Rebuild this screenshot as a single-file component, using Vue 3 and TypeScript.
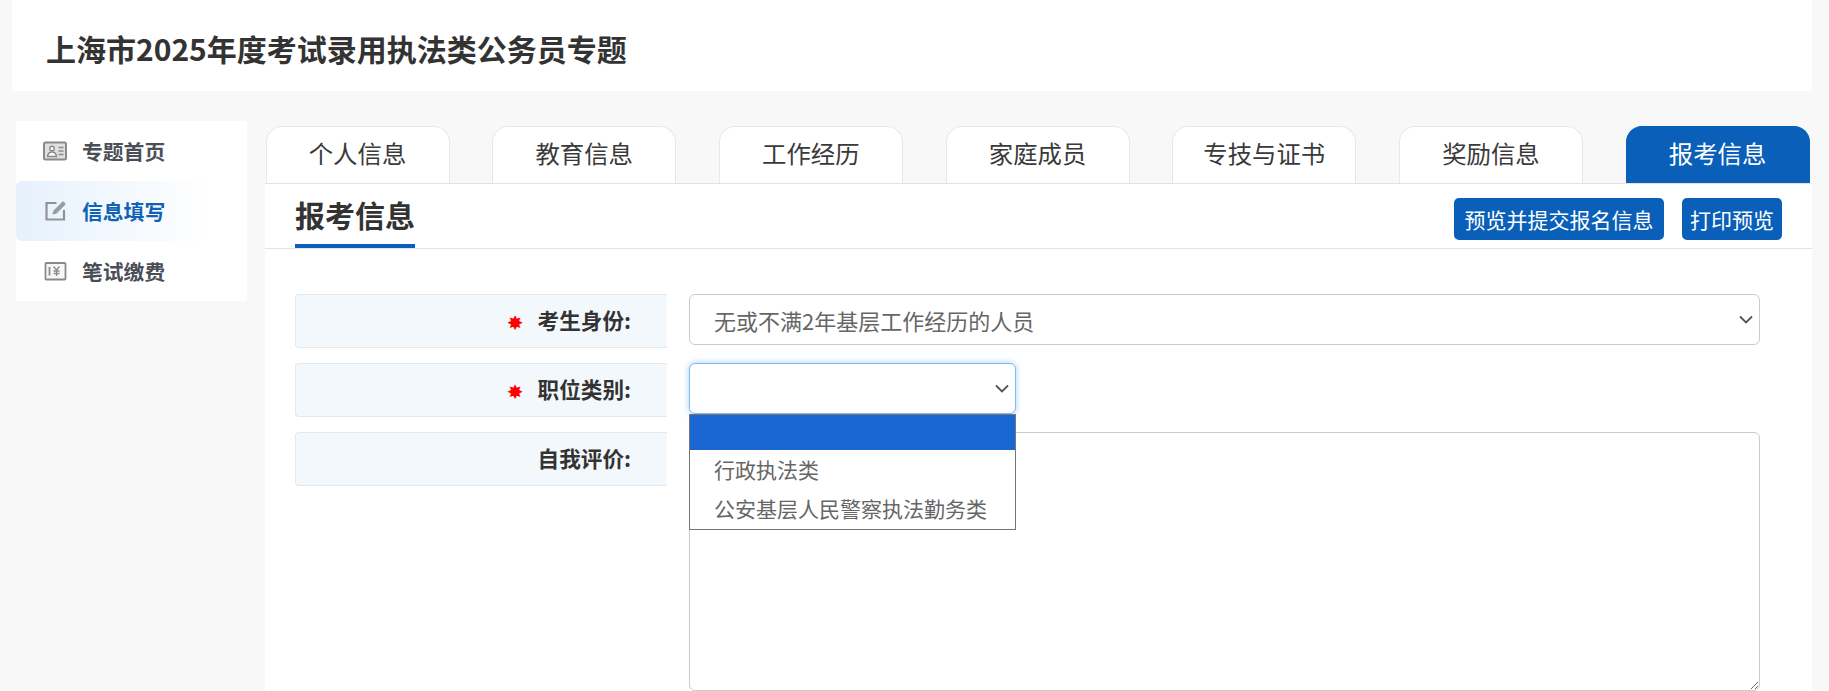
<script setup lang="ts">
const tabs = ['个人信息', '教育信息', '工作经历', '家庭成员', '专技与证书', '奖励信息', '报考信息']
</script>

<template>
  <div class="page">
    <header class="top">上海市2025年度考试录用执法类公务员专题</header>
    <div class="body">
      <nav class="side">
        <a class="item">
          <svg class="ico" viewBox="0 0 27 24" fill="none">
            <rect x="2" y="3.500" width="22" height="17" rx="1.500" fill="#e0e0e0" stroke="#8a8a8a" stroke-width="2" />
            <circle cx="10" cy="9.500" r="2.200" fill="#fff" stroke="#8a8a8a" stroke-width="1.400" />
            <path d="M5.500 17.500c.4-3 2.200-4.500 4.500-4.500s4.100 1.500 4.500 4.500z" fill="#fff" stroke="#8a8a8a" stroke-width="1.400" />
            <path d="M16.500 8.500h5M16.500 12h5M16.500 15.500h5" stroke="#8a8a8a" stroke-width="1.400" />
          </svg>
          <span>专题首页</span>
        </a>
        <a class="item active">
          <svg class="ico" viewBox="0 0 27 24" fill="none">
            <path d="M14.500 4H4.500v16.500H22V11" stroke="#8f9398" stroke-width="2.200" />
            <path d="M10.500 15.500l.8-3.800 8.700-8.700c.6-.6 1.400-.6 2 0l1 1c.6.6.6 1.400 0 2l-8.700 8.700z" fill="#9a9ea3" />
          </svg>
          <span>信息填写</span>
        </a>
        <a class="item">
          <svg class="ico" viewBox="0 0 27 24" fill="none">
            <rect x="3.500" y="4" width="20" height="16.500" rx=".8" fill="#f7f7f7" stroke="#8a8a8a" stroke-width="1.800" />
            <path d="M7.500 8v8.500" stroke="#8a8a8a" stroke-width="1.800" />
            <path d="M11.500 7.500l3 3.500 3-3.500M14.500 11v6M11.500 12h6M11.500 14.500h6" stroke="#8a8a8a" stroke-width="1.300" />
          </svg>
          <span>笔试缴费</span>
        </a>
      </nav>
      <main class="main">
        <div class="tabs">
          <div v-for="(t, i) in tabs" :key="t" class="tab" :class="{ on: i === tabs.length - 1 }">{{ t }}</div>
        </div>
        <section class="panel">
          <div class="phead">
            <h2 class="ptitle">报考信息</h2>
            <div class="acts">
              <button class="btn wide">预览并提交报名信息</button>
              <button class="btn">打印预览</button>
            </div>
          </div>
          <form class="form" @submit.prevent>
            <div class="row">
              <label class="lab"><i class="star">✸</i>考生身份:</label>
              <select class="ctl">
                <option>无或不满2年基层工作经历的人员</option>
              </select>
            </div>
            <div class="row">
              <label class="lab"><i class="star">✸</i>职位类别:</label>
              <div class="pick">
                <select class="ctl focus"><option></option></select>
                <ul class="menu">
                  <li class="hl">&nbsp;</li>
                  <li>行政执法类</li>
                  <li>公安基层人民警察执法勤务类</li>
                </ul>
              </div>
            </div>
            <div class="row">
              <label class="lab">自我评价:</label>
              <textarea class="area"></textarea>
            </div>
          </form>
        </section>
      </main>
    </div>
  </div>
</template>

<style>
html, body { margin: 0; height: 691px; overflow: hidden; background: #f8f8f8; }
</style>

<style scoped>
* { box-sizing: border-box; }
.page {
  font-family: "Noto Sans CJK SC", "Noto Sans", sans-serif;
  color: #333;
  padding: 0 17px 0 12px;
}
.top {
  height: 91px;
  background: #fff;
  font-size: 30px;
  font-weight: 700;
  line-height: 96px;
  padding-left: 34px;
  color: #333;
}
.body { display: flex; align-items: flex-start; margin-top: 30px; padding-left: 4px; }
.side { width: 231px; background: #fff; flex: none; }
.item {
  height: 60px;
  display: flex;
  align-items: center;
  padding-left: 26px;
  gap: 13px;
  font-size: 20.800px;
  font-weight: 700;
  color: #4a4f57;
  border-radius: 6px;
}
.item.active {
  color: #0f62b5;
  background: linear-gradient(90deg, #e6f1fc, #fff 85%);
}
.ico { width: 27px; height: 24px; flex: none; }
.main { flex: 1; margin-left: 18px; }
.tabs { display: flex; gap: 42.700px; padding: 5px 2px 0 .5px; height: 62px; }
.tab {
  width: 184px;
  height: 57px;
  background: #fff;
  border: 1px solid #e8e8e8;
  border-bottom: 0;
  border-radius: 16px 16px 0 0;
  text-align: center;
  font-size: 24.400px;
  line-height: 52px;
  color: #3a3a3a;
}
.tab.on { background: #0a60b8; border-color: #0a60b8; color: #fff; }
.panel { background: #fff; border-top: 1px solid #e2e2e2; height: 509px; overflow: hidden; }
.phead {
  height: 65px;
  border-bottom: 1px solid #e4e4e4;
  display: flex;
  justify-content: space-between;
  padding: 0 30px 0 30px;
}
.ptitle {
  margin: 0;
  height: 64px;
  width: 120px;
  font-size: 30px;
  font-weight: 700;
  line-height: 60px;
  border-bottom: 4px solid #0a60b8;
  color: #333;
}
.acts { display: flex; gap: 18px; padding-top: 14px; }
.btn {
  height: 42px;
  width: 100px;
  border: 0;
  border-radius: 5px;
  background: #0a60b8;
  color: #fff;
  font: 400 21px "Noto Sans CJK SC", sans-serif;
  padding: 0;
}
.btn.wide { width: 210px; }
.form { padding: 45px 0 0 30px; }
.row { display: flex; margin-bottom: 15px; }
.lab {
  flex: none;
  width: 372px;
  height: 54px;
  margin-right: 22px;
  background: #f3f8fd;
  border: 1px solid #e3e8ec;
  border-right: 0;
  border-radius: 4px 0 0 4px;
  text-align: right;
  font-size: 21.600px;
  font-weight: 700;
  line-height: 50px;
  padding-right: 36px;
  color: #333;
  white-space: nowrap;
}
.star {
  color: #f00;
  font: 700 20px "DejaVu Sans", sans-serif;
  margin-right: 14px;
  vertical-align: -1px;
}
.ctl {
  appearance: none;
  width: 1071px;
  height: 51px;
  border: 1px solid #ccc;
  border-radius: 6px;
  color: #666;
  font: 400 22px "Noto Sans CJK SC", sans-serif;
  padding: 0 40px 0 24px;
  outline: 0;
  display: block;
  background: #fff url("data:image/svg+xml,%3Csvg xmlns='http://www.w3.org/2000/svg' viewBox='0 0 14 9'%3E%3Cpath d='M1 1.500l6 6 6-6' fill='none' stroke='%23555' stroke-width='1.800'/%3E%3C/svg%3E") no-repeat right 6px center / 14px 9px;
}
.pick { position: relative; width: 327px; }
.ctl.focus {
  width: 327px;
  border-color: #7fbbec;
  box-shadow: 0 0 6px rgba(102, 175, 233, .6);
}
.menu {
  position: absolute;
  z-index: 2;
  left: 0;
  top: 51px;
  width: 327px;
  margin: 0;
  padding: 0;
  list-style: none;
  background: #fff;
  border: 1px solid #767676;
  font-size: 21px;
  color: #666;
}
.menu li { height: 39px; line-height: 38px; padding-left: 24px; white-space: nowrap; }
.menu li.hl { height: 35px; background: #1a67d2; }
.menu li:last-child { height: 40px; }
.area {
  width: 1071px;
  height: 259px;
  border: 1px solid #ccc;
  border-radius: 6px;
  background: #fff;
  outline: 0;
  display: block;
}
</style>
